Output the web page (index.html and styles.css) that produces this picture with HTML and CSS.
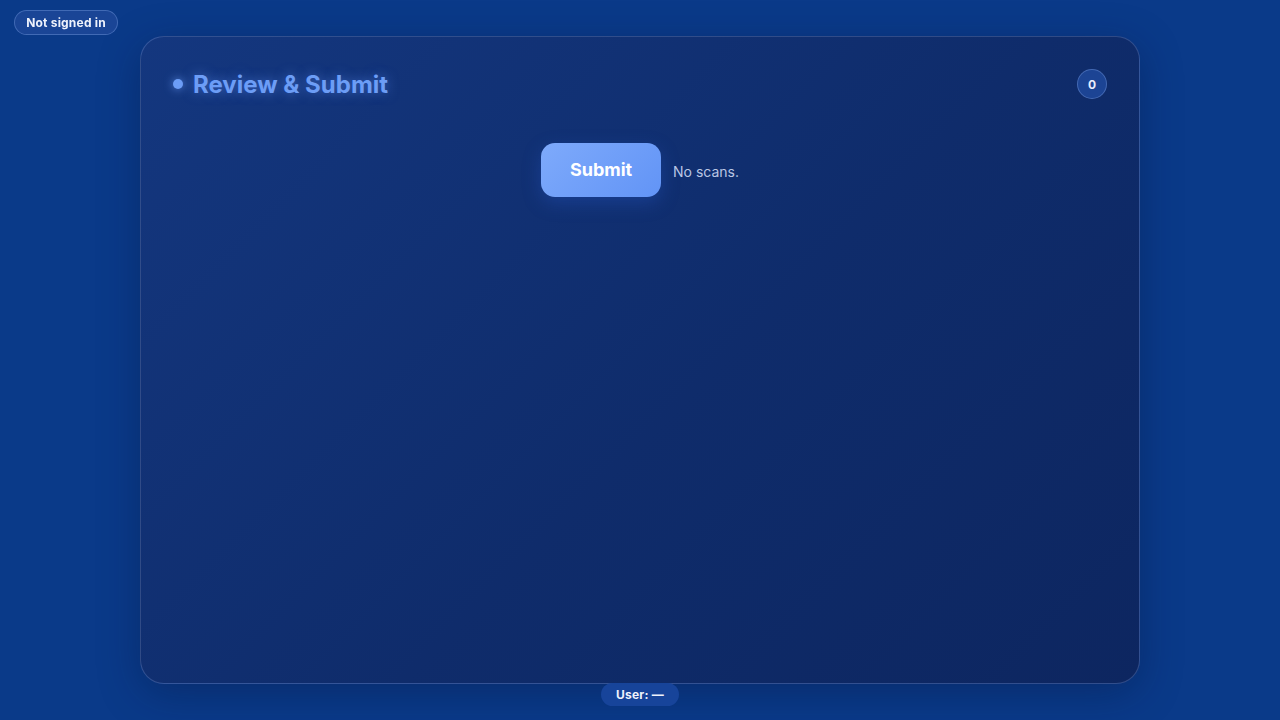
FILE: index.html
```html
<!DOCTYPE html>
<html lang="en">
<head>
<meta charset="utf-8">
<title>Review & Submit</title>
<link rel="stylesheet" href="styles.css">
</head>
<body>
<div class="status-pill top-pill">Not signed in</div>
<main class="card">
  <header class="card-head">
    <h1 class="title"><span class="dot"></span>Review &amp; Submit</h1>
    <span class="count">0</span>
  </header>
  <section class="actions">
    <button class="submit" type="button">Submit</button>
    <span class="note">No scans.</span>
  </section>
</main>
<div class="status-pill user-pill">User: —</div>
</body>
</html>
```
FILE: styles.css
```css
* { box-sizing: border-box; }
html, body { height: 100%; }
body {
  margin: 0;
  background: #0a3a89;
  font-family: Inter, "Noto Sans", sans-serif;
  color: #fff;
  padding: 36px 140px 36px;
  overflow: hidden;
}
.card {
  height: 648px;
  border-radius: 24px;
  border: 1px solid rgba(140, 170, 230, 0.28);
  background: linear-gradient(135deg, #14377f 0%, #0f2c6b 55%, #0d2660 100%);
  box-shadow: 0 10px 40px rgba(5, 20, 60, 0.35);
  padding: 33px 32px 32px;
}
.card-head {
  display: flex;
  align-items: center;
  justify-content: space-between;
}
.title {
  margin: 0;
  display: flex;
  align-items: center;
  gap: 10px;
  font-size: 24px;
  font-weight: 700;
  line-height: 30px;
  color: #6c9df6;
  text-shadow: 0 0 12px rgba(100, 150, 255, 0.55);
  letter-spacing: 0;
}
.dot {
  width: 10px;
  height: 10px;
  border-radius: 50%;
  background: #6c9df6;
  box-shadow: 0 0 10px rgba(110, 160, 255, 0.8);
  margin-top: -2px;
}
.count {
  width: 30px;
  height: 30px;
  border-radius: 50%;
  display: flex;
  align-items: center;
  justify-content: center;
  background: #1c4494;
  border: 1px solid rgba(140, 175, 240, 0.35);
  font-size: 12px;
  font-weight: 700;
  color: #e8eefc;
  margin-top: -2px;
}
.actions {
  margin-top: 43px;
  display: flex;
  align-items: center;
  justify-content: center;
  gap: 12px;
}
.submit {
  width: 120px;
  height: 54px;
  border: 0;
  border-radius: 14px;
  background: linear-gradient(135deg, #7eaafb 0%, #6294f6 100%);
  color: #fff;
  font-family: Inter, "Noto Sans", sans-serif;
  font-size: 18px;
  font-weight: 700;
  padding: 0 0 2px;
  box-shadow: 0 6px 18px rgba(40, 90, 200, 0.35);
}
.note {
  font-size: 14px;
  color: #b9c6e4;
  padding-top: 2px;
}
.status-pill {
  position: fixed;
  height: 25px;
  padding: 0 11px;
  border-radius: 13px;
  display: flex;
  align-items: center;
  font-size: 12px;
  font-weight: 700;
  color: #eef2fc;
  background: #1a4596;
  border: 1px solid rgba(140, 175, 240, 0.35);
  letter-spacing: 0.2px;
}
.top-pill { top: 10px; left: 14px; width: 104px; justify-content: center; padding: 0; }
.user-pill {
  top: 683px;
  left: 601px;
  width: 78px;
  height: 23px;
  justify-content: center;
  border: 0;
  background: #17449a;
  padding: 0;
}
```
